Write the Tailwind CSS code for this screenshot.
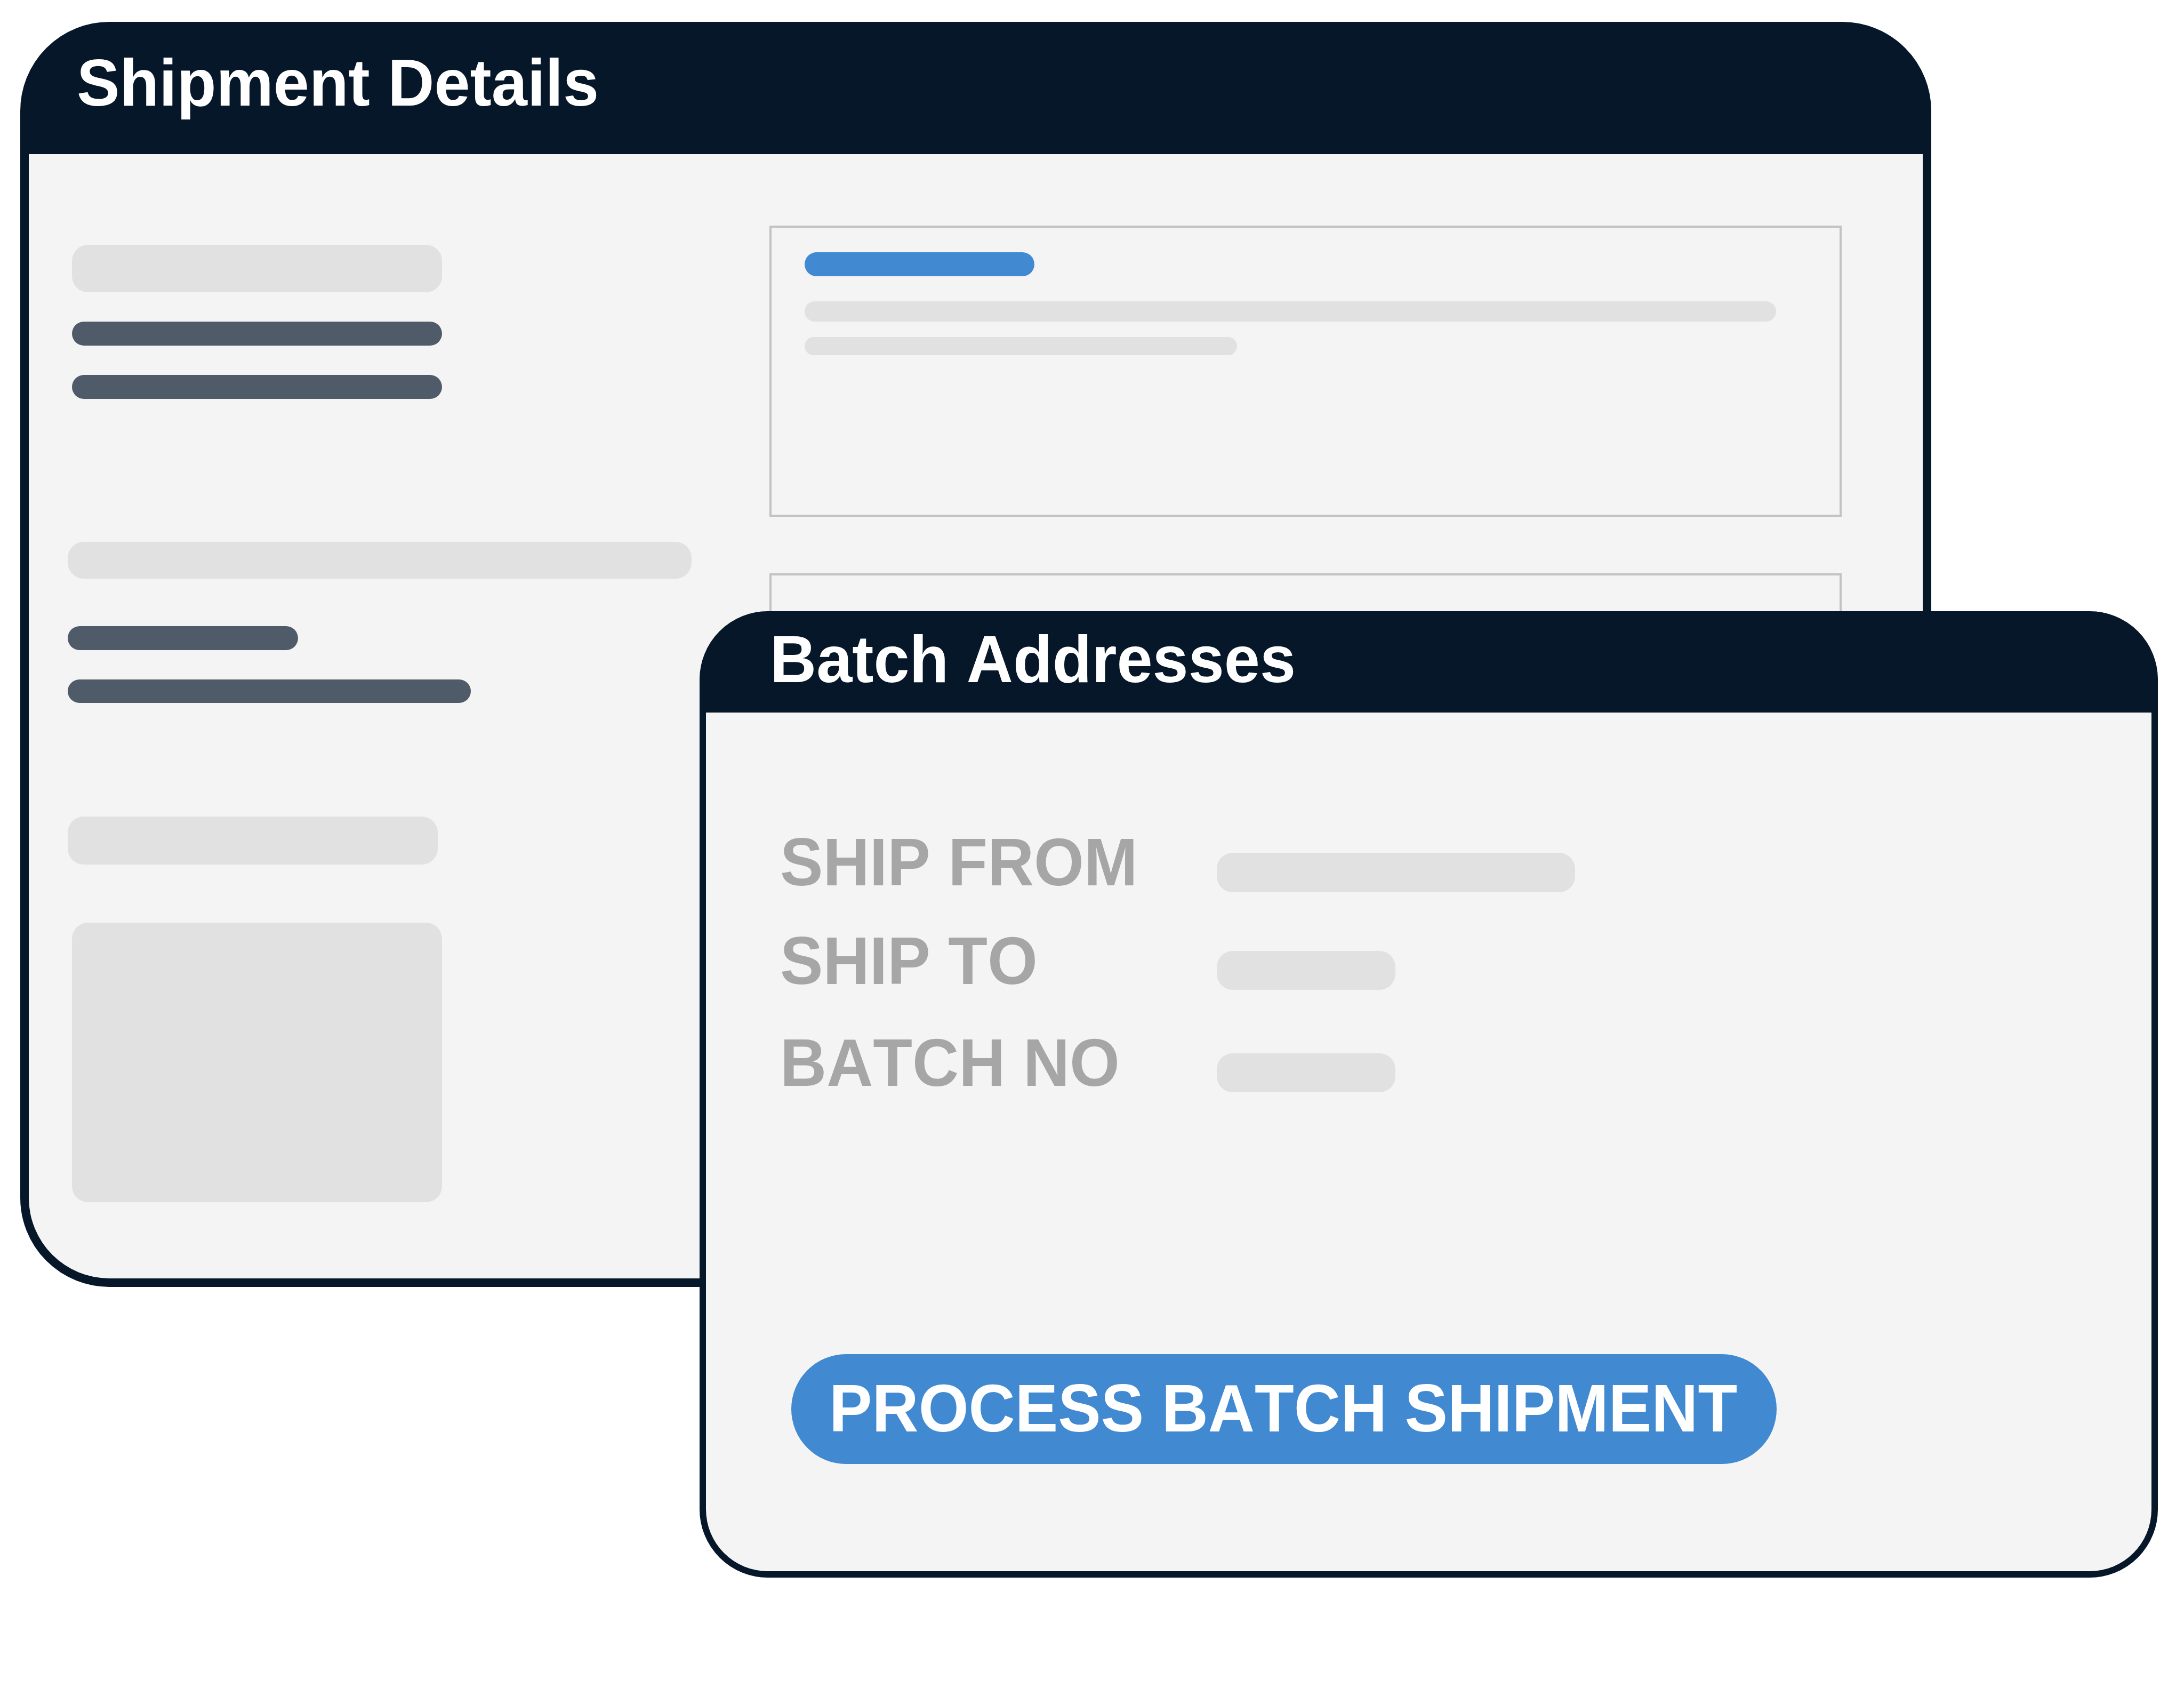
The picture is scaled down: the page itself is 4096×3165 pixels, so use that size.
<!DOCTYPE html>
<html lang="en">
<head>
<meta charset="utf-8">
<title>Batch Shipment</title>
<script src="https://cdn.jsdelivr.net/npm/@tailwindcss/browser@4"></script>
</head>
<body class="relative h-[3165px] w-[4096px] overflow-hidden bg-white font-['Liberation_Sans',Arial,sans-serif] text-[120.7px] leading-[121px] font-bold whitespace-nowrap [font-kerning:none]">

  <!-- Shipment Details window -->
  <section class="absolute top-[41px] left-[38px] flex h-[2372px] w-[3584px] flex-col rounded-[167px] border-16 border-[#051728] bg-[#051728]">
    <header class="h-[232px] shrink-0 pt-[39px] pl-[90px] text-white">
      <h1 class="origin-[0_102px] scale-y-[1.03]">Shipment Details</h1>
    </header>
    <div class="flex grow rounded-b-[151px] bg-[#f4f4f4]">
      <div class="flex w-[1389px] shrink-0 flex-col pt-[170px] pl-[73px]">
        <div class="ml-2 h-[89px] w-[694px] rounded-[30px] bg-[#e1e1e1]"></div>
        <div class="mt-[55px] ml-2 h-[45px] w-[694px] rounded-full bg-[#4f5b69]"></div>
        <div class="mt-[55px] ml-2 h-[45px] w-[694px] rounded-full bg-[#4f5b69]"></div>
        <div class="mt-[268px] h-[69px] w-[1170px] rounded-[30px] bg-[#e1e1e1]"></div>
        <div class="mt-[89px] h-[45px] w-[432px] rounded-full bg-[#4f5b69]"></div>
        <div class="mt-[55px] h-[44px] w-[756px] rounded-full bg-[#4f5b69]"></div>
        <div class="mt-[213px] h-[90px] w-[694px] rounded-[30px] bg-[#e1e1e1]"></div>
        <div class="mt-[109px] ml-2 h-[524px] w-[694px] rounded-[30px] bg-[#e1e1e1]"></div>
      </div>
      <div class="flex flex-col gap-[106px] pt-[134px]">
        <div class="h-[546px] w-[2011px] border-4 border-[#c3c3c3] pt-[46px] pl-[62px]">
          <div class="h-[45px] w-[431px] rounded-full bg-[#4189d1]"></div>
          <div class="mt-[47px] h-[38px] w-[1822px] rounded-full bg-[#e1e1e1]"></div>
          <div class="mt-[29px] h-[34px] w-[811px] rounded-full bg-[#e1e1e1]"></div>
        </div>
        <div class="h-[546px] w-[2011px] border-4 border-[#c3c3c3]"></div>
      </div>
    </div>
  </section>

  <!-- Batch Addresses window -->
  <section class="absolute top-[1146px] left-[1312px] flex h-[1812px] w-[2735px] flex-col rounded-[128px] border-12 border-[#051728] bg-[#051728]">
    <header class="h-[178px] shrink-0 pt-[19px] pl-[120px] text-white">
      <h2 class="origin-[0_102px] scale-y-[1.03]">Batch Addresses</h2>
    </header>
    <div class="flex grow flex-col items-start rounded-b-[116px] bg-[#f4f4f4] pt-[222px] pl-[139px] text-[#a6a6a6]">
      <div class="flex h-[121px]">
        <span class="w-[819px] origin-[0_102px] scale-y-[1.04]">SHIP FROM</span>
        <div class="mt-[41px] h-[74px] w-[672px] rounded-[30px] bg-[#e1e1e1]"></div>
      </div>
      <div class="mt-[64px] flex h-[121px]">
        <span class="w-[819px] origin-[0_102px] scale-y-[1.04]">SHIP TO</span>
        <div class="mt-[40px] h-[73px] w-[335px] rounded-[30px] bg-[#e1e1e1]"></div>
      </div>
      <div class="mt-[70px] flex h-[121px]">
        <span class="w-[819px] origin-[0_102px] scale-y-[1.04]">BATCH NO</span>
        <div class="mt-[41px] h-[73px] w-[335px] rounded-[30px] bg-[#e1e1e1]"></div>
      </div>
      <button class="mt-[484px] ml-[21px] flex h-[206px] w-[1848px] items-start rounded-full bg-[#4189d1] pt-[43px] pl-[71px] text-white">
        <span class="origin-[0_102px] scale-y-[1.04]">PROCESS BATCH SHIPMENT</span>
      </button>
    </div>
  </section>

</body>
</html>
